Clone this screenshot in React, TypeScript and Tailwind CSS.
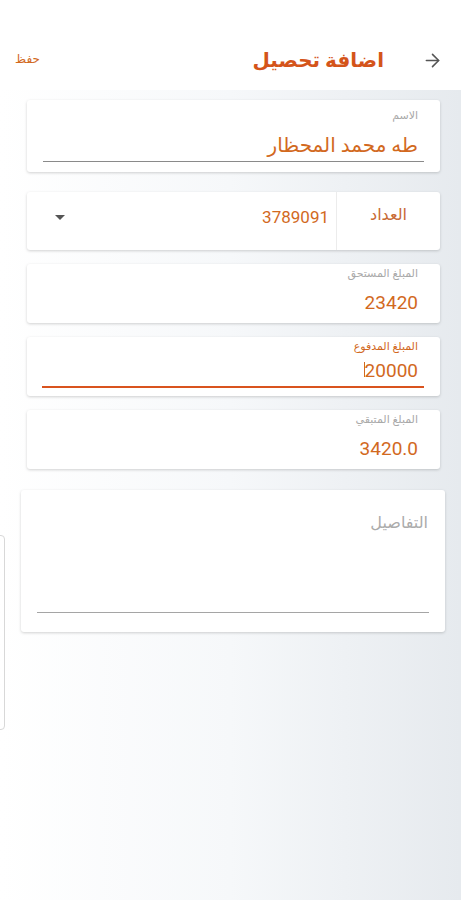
import { ArrowRight } from "lucide-react";

const font = { fontFamily: "Roboto, 'DejaVu Sans', sans-serif" };

function AmountCard({
  label,
  value,
  active = false,
}: {
  label: string;
  value: string;
  active?: boolean;
}) {
  return (
    <div className="mr-[21px] ml-[27px] h-[59px] rounded-[3px] bg-white shadow-[0_1px_3px_rgba(0,0,0,0.18)] px-[22px] pt-[2px]">
      <p className={`text-[11px] leading-[16px] ${active ? "text-[#d2691e]" : "text-[#a9a9a9]"}`}>{label}</p>
      {active ? (
        <div className="mr-[-6px] ml-[-7px] border-b-2 border-[#d9531e] pr-[6px]">
          <div className="flex items-end">
            <span className="text-[19px] leading-[31px] text-[#d2691e]">{value}</span>
            <span className="mb-[9px] ml-[1px] h-[15px] w-px bg-[#d2691e]" />
          </div>
        </div>
      ) : (
        <p className="pt-[7px] text-[19px] leading-[28px] text-[#d2691e]">{value}</p>
      )}
    </div>
  );
}

export default function App() {
  return (
    <div dir="rtl" className="relative flex min-h-[900px] w-full flex-col overflow-hidden" style={font}>
      <header className="flex h-[90px] items-center bg-white pt-[30px] pr-[18px] pl-[15px]">
        <ArrowRight className="h-[21px] w-[21px] text-[#555]" strokeWidth={1.8} />
        <h1 className="mr-[38px] text-[20px] font-bold text-[#d4541a]">اضافة تحصيل</h1>
        <button className="mr-auto pb-[2px] text-[12px] text-[#d2691e]">حفظ</button>
      </header>

      <main className="flex flex-1 flex-col bg-gradient-to-r from-white via-[#f6f8fa] to-[#e6eaee] pt-[10px] pb-[40px]">
        <div className="mr-[21px] ml-[27px] h-[72px] rounded-[3px] bg-white shadow-[0_1px_3px_rgba(0,0,0,0.18)] px-[16px] pt-[8px]">
          <p className="pr-[6px] text-[11px] leading-[16px] text-[#a9a9a9]">الاسم</p>
          <div className="border-b border-[#8a8a8a] pr-[6px] pt-[6px] pb-[1px]">
            <span className="text-[20px] leading-[30px] text-[#d2691e]">طه محمد المحظار</span>
          </div>
        </div>

        <div className="mt-[20px] mr-[21px] ml-[27px] flex h-[58px] rounded-[3px] bg-white shadow-[0_1px_3px_rgba(0,0,0,0.18)]">
          <div className="flex w-[104px] items-center justify-center border-l border-[#ececec] pb-[12px]">
            <span className="text-[16px] text-[#c86a35]">العداد</span>
          </div>
          <div className="flex flex-1 items-center justify-between pr-[7px] pl-[28px] pb-[6px]">
            <span className="text-[17px] text-[#d2691e]">3789091</span>
            <svg width="10" height="6" viewBox="0 0 10 6">
              <path d="M0 0h10L5 5z" fill="#555" />
            </svg>
          </div>
        </div>

        <div className="mt-[14px]">
          <AmountCard label="المبلغ المستحق" value="23420" />
        </div>
        <div className="mt-[14px]">
          <AmountCard label="المبلغ المدفوع" value="20000" active />
        </div>
        <div className="mt-[14px]">
          <AmountCard label="المبلغ المتبقي" value="3420.0" />
        </div>

        <div className="mt-[21px] mr-[16px] ml-[21px] h-[142px] rounded-[3px] bg-white shadow-[0_1px_3px_rgba(0,0,0,0.18)] px-[16px] pt-[22px]">
          <p className="pr-[1px] text-[16px] leading-[22px] text-[#ababab]">التفاصيل</p>
          <div className="mt-[78px] border-b border-[#a5a5a5]" />
        </div>
      </main>

      <div className="absolute top-[535px] left-[-6px] h-[195px] w-[11px] rounded-[4px] border border-[#d8d8d8] bg-white/40" />
    </div>
  );
}
